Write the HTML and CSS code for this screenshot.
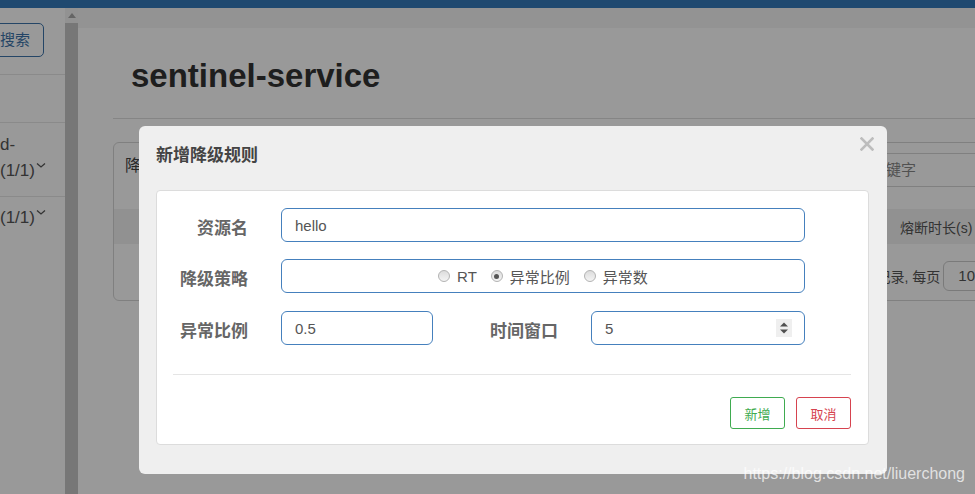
FILE: index.html
```html
<!DOCTYPE html>
<html lang="zh-CN">
<head>
<meta charset="utf-8">
<title>sentinel-service</title>
<link rel="stylesheet" href="styles.css">
</head>
<body>
<div class="page">
  <div class="topbar"></div>
  <div class="layout">
    <aside class="sidebar">
      <div class="side-search"><button class="btn-search">搜索</button></div>
      <div class="side-empty"></div>
      <div class="side-item first">
        <div>d-</div>
        <div>(1/1)<svg class="chev" width="10" height="7" viewBox="0 0 10 7"><polyline points="1,1.5 5,5 9,1.5" fill="none" stroke="#555" stroke-width="1.3"/></svg></div>
      </div>
      <div class="side-item second">
        <div>(1/1)<svg class="chev" width="10" height="7" viewBox="0 0 10 7"><polyline points="1,1.5 5,5 9,1.5" fill="none" stroke="#555" stroke-width="1.3"/></svg></div>
      </div>
    </aside>
    <div class="scrollbar">
      <div class="sb-arrow"><svg width="8" height="5" viewBox="0 0 8 5"><polygon points="0,5 4,0 8,5" fill="#a8a8a8"/></svg></div>
      <div class="sb-thumb"></div>
    </div>
    <main class="main">
      <div class="crumb"></div>
      <div class="content">
        <h1 class="page-title">sentinel-service</h1>
        <div class="divider"></div>
        <section class="card">
          <div class="card-head">
            <span class="card-title">降级规则</span>
            <div class="search-input">关键字</div>
          </div>
          <div class="thead">
            <span class="th c1"></span>
            <span class="th c5">熔断时长(s)</span>
          </div>
          <div class="tfoot">
            <span class="foot-text">共 0 条记录, 每页</span>
            <span class="select">10</span>
            <span class="foot-text">条记录</span>
          </div>
        </section>
      </div>
    </main>
  </div>
</div>

<div class="overlay"></div>

<div class="modal">
  <div class="modal-head">
    <span class="modal-title">新增降级规则</span>
  </div>
  <svg class="modal-close" width="14" height="14" viewBox="0 0 14 14"><path d="M1.5 1.5 L12.5 12.5 M12.5 1.5 L1.5 12.5" stroke="#bdbdbd" stroke-width="2.6" stroke-linecap="square"/></svg>
  <div class="panel">
    <div class="form-row">
      <label class="label">资源名</label>
      <div class="input wide">hello</div>
    </div>
    <div class="form-row">
      <label class="label">降级策略</label>
      <div class="input wide radios">
        <span class="radio-item"><span class="radio"></span>RT</span>
        <span class="radio-item"><span class="radio checked"></span>异常比例</span>
        <span class="radio-item"><span class="radio"></span>异常数</span>
      </div>
    </div>
    <div class="form-row third">
      <label class="label">异常比例</label>
      <div class="input small">0.5</div>
      <label class="label label2">时间窗口</label>
      <div class="input medium">
        <span class="val">5</span>
        <svg class="spinner" width="16" height="18" viewBox="0 0 16 18"><rect width="16" height="18" fill="#efefef"/><polygon points="4,7.5 8,3.5 12,7.5" fill="#505050"/><polygon points="4,10.5 12,10.5 8,14.5" fill="#505050"/></svg>
      </div>
    </div>
    <div class="hr"></div>
    <div class="actions">
      <button class="btn btn-ok">新增</button>
      <button class="btn btn-cancel">取消</button>
    </div>
  </div>
</div>

<div class="watermark">https://blog.csdn.net/liuerchong</div>
</body>
</html>
```

FILE: styles.css
```css
* { box-sizing: border-box; }
html, body { margin: 0; padding: 0; }
body {
  width: 975px;
  height: 494px;
  overflow: hidden;
  position: relative;
  background: #fff;
  font-family: "Liberation Sans", "Noto Sans CJK SC", sans-serif;
}

/* background page */
.topbar { height: 8px; background: #347bbb; }
.layout { display: flex; height: 486px; }

.sidebar {
  width: 65px;
  flex: none;
  overflow: hidden;
  color: #555;
  font-size: 17px;
}
.side-search {
  height: 67px;
  padding-top: 15px;
  border-bottom: 1px solid #e6e6e6;
}
.btn-search {
  height: 34px;
  margin-left: -14px;
  padding: 0 13px;
  border: 1px solid #3d74aa;
  border-radius: 5px;
  background: #fff;
  color: #3d74aa;
  font-family: inherit;
  font-size: 15px;
  line-height: 32px;
  white-space: nowrap;
}
.side-empty { height: 48px; border-bottom: 1px solid #e6e6e6; }
.side-item { line-height: 26px; white-space: nowrap; }
.side-item.first { padding: 9px 0 12px; border-bottom: 1px solid #e6e6e6; }
.side-item.second { padding: 8px 0 12px; }
.chev { margin-left: 1px; vertical-align: 7px; }

.scrollbar {
  width: 13px;
  flex: none;
  display: flex;
  flex-direction: column;
  background: #f4f4f4;
}
.sb-arrow { height: 15px; display: flex; align-items: center; justify-content: center; }
.sb-thumb { flex: 1; background: #c6c6c6; }

.main { flex: 1; min-width: 0; overflow: hidden; }
.crumb { height: 20px; background: #f5f5f5; }
.content { padding-left: 35px; }
.page-title {
  margin: 28px 0 0 18px;
  font-size: 33px;
  line-height: 40px;
  font-weight: bold;
  color: #333;
}
.divider { width: 960px; margin-top: 22px; border-top: 1px solid #dedede; }
.card {
  width: 960px;
  margin-top: 23px;
  border: 1px solid #d6d6d6;
  border-radius: 6px;
  padding-bottom: 9px;
  color: #555;
}
.card-head {
  height: 66px;
  display: flex;
  align-items: flex-start;
  justify-content: space-between;
  padding: 11px 32px 0 11px;
}
.card-title { font-size: 16px; line-height: 24px; color: #444; }
.search-input {
  width: 180px;
  height: 34px;
  margin-top: -1px;
  border: 1px solid #d6d6d6;
  border-radius: 4px;
  padding-left: 10px;
  font-size: 15px;
  line-height: 32px;
  color: #888;
}
.thead {
  height: 35px;
  display: flex;
  align-items: center;
  background: #f2f2f2;
  font-size: 14px;
  color: #555;
}
.th { white-space: nowrap; }
.c1 { width: 786px; }
.c5 { width: 120px; }
.tfoot {
  height: 30px;
  margin-top: 17px;
  display: flex;
  align-items: center;
  padding-left: 719px;
  font-size: 14px;
  color: #555;
  white-space: nowrap;
}
.select {
  width: 48px;
  height: 30px;
  margin: 0 4px 0 3px;
  border: 1px solid #ccc;
  border-radius: 6px;
  padding-left: 14px;
  line-height: 28px;
  font-size: 15px;
  color: #555;
}

.overlay {
  position: absolute;
  inset: 0;
  background: rgba(0, 0, 0, 0.4);
}

/* modal */
.modal {
  position: absolute;
  left: 139px;
  top: 126px;
  width: 748px;
  height: 348px;
  padding: 0 18px 0 17px;
  background: #efefef;
  border-radius: 6px;
}
.modal-head { height: 64px; padding-top: 18px; }
.modal-title {
  font-size: 17px;
  line-height: 24px;
  font-weight: bold;
  color: #444;
}
.modal-close { position: absolute; top: 11px; right: 13px; }

.panel {
  background: #fff;
  border: 1px solid #dcdcdc;
  border-radius: 4px;
  padding: 17px 17px 15px 16px;
  display: flex;
  flex-direction: column;
}
.form-row { display: flex; align-items: center; height: 34px; }
.form-row + .form-row { margin-top: 17px; }
.form-row.third { margin-top: 18px; }
.label {
  width: 75px;
  flex: none;
  margin-right: 33px;
  padding-top: 2px;
  text-align: right;
  font-size: 17px;
  font-weight: bold;
  color: #666;
  white-space: nowrap;
}
.label2 { width: 125px; }
.input {
  height: 34px;
  flex: none;
  display: flex;
  align-items: center;
  border: 1px solid #4580bd;
  border-radius: 6px;
  padding-left: 13px;
  font-size: 15px;
  color: #555;
  background: #fff;
}
.wide { width: 524px; }
.small { width: 152px; }
.medium { width: 214px; padding-right: 12px; }
.val { flex: 1; }
.radios { justify-content: center; padding-left: 0; gap: 14px; }
.radio-item { display: flex; align-items: center; gap: 7px; white-space: nowrap; }
.radio {
  width: 12px;
  height: 12px;
  border-radius: 50%;
  border: 1px solid #b3b3b3;
  background: linear-gradient(#dcdcdc, #f4f4f4);
  display: flex;
  align-items: center;
  justify-content: center;
}
.radio.checked::after {
  content: "";
  width: 5px;
  height: 5px;
  border-radius: 50%;
  background: #555;
}
.hr { margin: 29px 0 22px; border-top: 1px solid #e5e5e5; }
.actions { display: flex; justify-content: flex-end; gap: 11px; }
.btn {
  width: 55px;
  height: 32px;
  padding: 0;
  border-radius: 3px;
  background: #fff;
  font-family: inherit;
  font-size: 13px;
}
.btn-ok { border: 1px solid #3fab50; color: #3fab50; }
.btn-cancel { border: 1px solid #d6434f; color: #d6434f; }

.watermark {
  position: absolute;
  right: 10px;
  bottom: 11px;
  font-size: 16px;
  line-height: 18px;
  color: rgba(255, 255, 255, 0.72);
}
```
